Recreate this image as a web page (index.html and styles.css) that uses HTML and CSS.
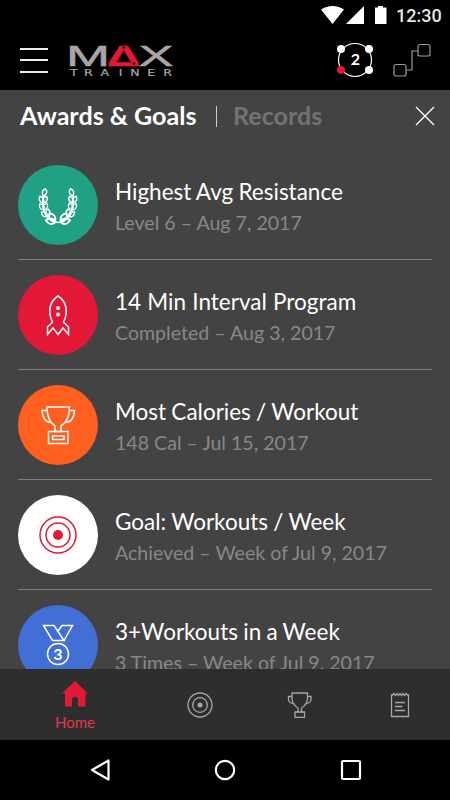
FILE: index.html
```html
<!DOCTYPE html>
<html lang="en">
<head>
  <meta charset="UTF-8">
  <meta name="viewport" content="width=device-width, initial-scale=1">
  <title>Max Trainer - Awards &amp; Goals</title>
  <link rel="stylesheet" href="styles.css">
</head>
<body>
  <div class="status-bar">
    <svg width="66" height="18" viewBox="0 0 66 18" fill="#fff">
      <path d="M0 3.6C6.5-1.2 16.500-1.200 23 3.600L11.500 18z"/>
      <path d="M43 0v18H25z"/>
      <path d="M54 1.500h3V0h5v1.500h3.500V18H54z"/>
    </svg>
    <span class="clock">12:30</span>
  </div>

  <header class="top-bar">
    <button class="menu"><span></span><span></span><span></span></button>
    <svg class="logo" width="114" height="50" viewBox="-5 -8 114 50">
      <g class="logo-max">
        <text x="-4" y="23" textLength="44" lengthAdjust="spacingAndGlyphs">M</text>
        <text class="linkage" x="37" y="23" textLength="33" lengthAdjust="spacingAndGlyphs">Δ</text>
        <text x="68.500" y="23" textLength="35" lengthAdjust="spacingAndGlyphs">X</text>
      </g>
      <text class="logo-sub" transform="scale(1.4 1)" x="0 10 21.800 34.800 43 55.200 66.600" y="33.300">TRAINER</text>
      <circle cx="53.700" cy="4.500" r="1.700" fill="#000" stroke="#e31836"/>
      <circle cx="64" cy="20.500" r="1.700" fill="#000" stroke="#e31836"/>
    </svg>
    <svg class="users" width="38" height="36" viewBox="0 0 38 36">
      <circle cx="19" cy="18" r="16.500" fill="none" stroke="#fff" stroke-width="1.200"/>
      <g fill="#fff">
        <circle cx="5" cy="7" r="4"/>
        <circle cx="33" cy="7" r="4"/>
        <circle cx="33" cy="28" r="4"/>
      </g>
      <circle cx="5" cy="28" r="4" fill="#e31836"/>
      <text x="19.500" y="23" text-anchor="middle">2</text>
    </svg>
    <svg class="link" width="38" height="34" viewBox="0 0 38 34" fill="none" stroke="#999" stroke-width="1.200">
      <rect x="1" y="21.500" width="12" height="11.500" rx="2"/>
      <rect x="25" y="1.500" width="12" height="11.500" rx="2"/>
      <path d="M13 27h6V8h6"/>
    </svg>
  </header>

  <main>
    <div class="tabs">
      <span class="tab active">Awards &amp; Goals</span>
      <span class="divider"></span>
      <span class="tab">Records</span>
      <button class="close">
        <svg width="20" height="20" viewBox="0 0 20 20" stroke="#fff" stroke-width="1.300"><path d="M1 1l18 18M19 1L1 19"/></svg>
      </button>
    </div>

    <ul class="awards">
      <li>
        <svg class="badge green" viewBox="0 0 80 80">
          <defs>
            <path id="leaf" d="M0 0C-3.200-2.500-2.500-5.500 0-7.500C2.500-5.500 3.200-2.500 0 0z"/>
            <g id="branch">
              <path d="M40 57.500C29 56 24 47 25 36V30"/>
              <use href="#leaf" transform="translate(25.500 31) rotate(15)"/>
              <use href="#leaf" transform="translate(25 38) rotate(-25)"/>
              <use href="#leaf" transform="translate(25 38) rotate(30)"/>
              <use href="#leaf" transform="translate(26 45) rotate(-35)"/>
              <use href="#leaf" transform="translate(26 45) rotate(22)"/>
              <use href="#leaf" transform="translate(29.500 51.500) rotate(-54)"/>
              <use href="#leaf" transform="translate(29.500 51.500) rotate(4)"/>
              <use href="#leaf" transform="translate(37.500 57) rotate(-80) scale(1.300)"/>
              <use href="#leaf" transform="translate(37 56.500) rotate(-35) scale(1.300)"/>
            </g>
          </defs>
          <use href="#branch"/>
          <use href="#branch" transform="matrix(-1 0 0 1 80 0)"/>
        </svg>
        <div class="info"><h3>Highest Avg Resistance</h3><p>Level 6 – Aug 7, 2017</p></div>
      </li>
      <li>
        <svg class="badge red" viewBox="0 0 80 80">
          <path d="M40 21C33 25.500 28.500 35 34.500 47L29.500 52V59.500L35 53L40 59.500L45 53L50.500 59.500V52L45.500 47C51.500 35 47 25.500 40 21z"/>
          <circle class="solid" cx="40" cy="33" r="2"/>
          <circle class="solid" cx="40" cy="39.500" r="2"/>
        </svg>
        <div class="info"><h3 class="wide">14 Min Interval Program</h3><p>Completed – Aug 3, 2017</p></div>
      </li>
      <li>
        <svg class="badge orange" viewBox="0 0 80 80">
          <path d="M29 22H51.500C51.500 31.500 49 37.500 43 41V46.500H37V41C31.500 37.500 29 31.500 29 22z"/>
          <path d="M29.500 25.500H24C24.500 32.500 27 37.500 33.500 37.500M51 25.500H56.500C56 32.500 53.500 37.500 47 37.500"/>
          <path d="M30.500 46.500H50V58.500H30.500zM34.500 51H46V54.500H34.500z"/>
        </svg>
        <div class="info"><h3>Most Calories / Workout</h3><p>148 Cal – Jul 15, 2017</p></div>
      </li>
      <li>
        <svg class="badge white" viewBox="0 0 80 80">
          <circle cx="40" cy="40" r="18"/>
          <circle cx="40" cy="40" r="12"/>
          <circle class="solid" cx="40" cy="40" r="5"/>
        </svg>
        <div class="info"><h3>Goal: Workouts / Week</h3><p>Achieved – Week of Jul 9, 2017</p></div>
      </li>
      <li>
        <svg class="badge blue" viewBox="0 0 80 80">
          <path d="M25.500 20.500H36L46 35.500H34.500zM40 26L44 20.500H54.500L46 35.500"/>
          <circle cx="40" cy="49" r="10.500"/>
          <text x="40" y="54.700" text-anchor="middle">3</text>
        </svg>
        <div class="info"><h3>3+Workouts in a Week</h3><p>3 Times – Week of Jul 9, 2017</p></div>
      </li>
    </ul>
  </main>

  <nav class="tab-bar">
    <a class="active">
      <svg width="26" height="26" viewBox="0 0 26 26" fill="#e31836"><path d="M13 0L26 12.500H23.500V25.500H16V18.500C16 14.700 10 14.700 10 18.500V25.500H3V12.500H0z"/></svg>
      <span>Home</span>
    </a>
    <a>
      <svg width="26" height="26" viewBox="0 0 26 26">
        <circle cx="13" cy="13" r="12"/>
        <circle cx="13" cy="13" r="7.300"/>
        <circle cx="13" cy="13" r="2.500" fill="#a6a6a6" stroke="none"/>
      </svg>
    </a>
    <a>
      <svg width="26" height="26" viewBox="0 0 26 26">
        <path d="M5 1H20.500V6C20.500 11 18.500 13.500 14.500 16V20H17.500V25.500H8V20H11V16C7 13.500 5 11 5 6z"/>
        <path d="M5 4.500H1.500V8Q2 11 6.500 11.500M20.500 4.500H24V8Q23.500 11 19 11.500M10 20h6"/>
      </svg>
    </a>
    <a>
      <svg width="20" height="26" viewBox="0 0 20 26">
        <path d="M4 1.500L2.500 3Q1.500 2 1.500 4V24.500H18.500V4Q18.500 2 17.500 3L16 1.500L14.500 3.500L13 1.500L11.500 3.500L10 1.500L8.500 3.500L7 1.500L5.500 3.500z"/>
        <path d="M5 10.500H15M5 14.500H12.500M5 18.500H15"/>
      </svg>
    </a>
  </nav>

  <footer class="system-bar">
    <svg width="20" height="22" viewBox="0 0 20 22"><path d="M18.500 1.500V20.500L2 11z"/></svg>
    <svg width="22" height="22" viewBox="0 0 22 22"><circle cx="11" cy="11" r="9.200"/></svg>
    <svg width="22" height="22" viewBox="0 0 22 22"><rect x="2" y="2" width="18" height="18" rx="1"/></svg>
  </footer>
</body>
</html>
```

FILE: styles.css
```css
* {
  box-sizing: border-box;
}
body {
  margin: 0;
  height: 800px;
  display: flex;
  flex-direction: column;
  background: #000;
  color: #fff;
  font-family: Lato, sans-serif;
  overflow: hidden;
}
button {
  padding: 0;
  border: none;
  background: none;
}
svg {
  display: block;
  flex: none;
}
.status-bar {
  height: 30px;
  padding: 6px 10px 0 0;
  display: flex;
  justify-content: flex-end;
  gap: 9px;
}
.clock {
  width: 44px;
  font: 500 18px/19px Roboto, sans-serif;
  color: #e6e6e6;
  white-space: nowrap;
}
.top-bar {
  height: 60px;
  padding: 0 19px 0 20px;
  display: flex;
  align-items: center;
}
.menu {
  width: 28px;
  height: 25px;
  display: flex;
  flex-direction: column;
  justify-content: space-between;
}
.menu span {
  width: 28px;
  height: 2px;
  background: #eee;
}
.logo {
  margin-left: 17px;
}
.logo-max {
  font: 400 30px "Liberation Sans", sans-serif;
  fill: #a6a6a6;
  stroke: #a6a6a6;
  stroke-width: 0.500;
}
.logo-max .linkage {
  font-weight: 700;
  fill: #e31836;
  stroke: #e31836;
}
.logo-sub {
  font: 400 9px "DejaVu Sans", sans-serif;
  fill: #a6a6a6;
  stroke: #a6a6a6;
  stroke-width: 0.200;
}
.users {
  margin-left: auto;
  margin-right: 19px;
}
.users text {
  font: 700 16px Lato, sans-serif;
  fill: #fff;
}

main {
  height: 579px;
  background: #434343;
  overflow: hidden;
}
.tabs {
  height: 52px;
  padding: 0 15px 0 20px;
  display: flex;
  align-items: center;
}
.tab {
  margin-top: -2px;
  font-size: 25.100px;
  font-weight: 700;
  color: #737373;
}
.tab.active {
  color: #fff;
}
.divider {
  width: 1px;
  height: 21px;
  margin: 0 16px 0 19.500px;
  background: #ccc;
}
.close {
  margin-left: auto;
}
.awards {
  list-style: none;
  margin: 8px 18px 0;
  padding: 0;
}
.awards li {
  height: 110px;
  padding-top: 5px;
  display: flex;
  align-items: center;
  gap: 17px;
  border-bottom: 1px solid #808080;
}
.badge {
  width: 80px;
  height: 80px;
  margin-top: -4px;
  border-radius: 50%;
  fill: none;
  stroke: #fff;
  stroke-width: 1.500;
}
.badge .solid {
  fill: #fff;
  stroke: none;
}
.green {
  background: #20a084;
  stroke-width: 1.400;
}
.red {
  background: #e31836;
}
.orange {
  background: #ff5f1f;
}
.white {
  background: #fff;
  stroke: #e31836;
}
.white .solid {
  fill: #e31836;
}
.blue {
  background: #426fd6;
}
.badge text {
  font: 700 16px Lato, sans-serif;
  fill: #fff;
  stroke: none;
}
.info {
  margin-top: -1px;
  white-space: nowrap;
}
.info h3 {
  margin: 0;
  font-size: 22.500px;
  font-weight: 400;
  line-height: 31px;
  word-spacing: -0.500px;
}
.info h3.wide {
  word-spacing: 0.500px;
}
.info p {
  margin: 0;
  padding-top: 1px;
  font-size: 19.600px;
  line-height: 30px;
  color: #888;
}

.tab-bar {
  height: 71px;
  display: grid;
  grid-template-columns: 150px 100px 100px 100px;
  background: #2e2e2e;
}
.tab-bar a {
  display: flex;
  flex-direction: column;
  align-items: center;
  justify-content: center;
}
.tab-bar .active {
  padding-top: 4px;
}
.tab-bar svg {
  fill: none;
  stroke: #a6a6a6;
  stroke-width: 1.300;
}
.tab-bar .active svg {
  fill: #e31836;
  stroke: none;
}
.tab-bar .active span {
  margin-top: 5px;
  font-size: 15px;
  line-height: 20px;
  color: #e8344f;
}
.system-bar {
  height: 60px;
  padding: 0 88px 0 90px;
  display: flex;
  align-items: center;
  justify-content: space-between;
}
.system-bar svg {
  fill: none;
  stroke: #fff;
  stroke-width: 2.200;
  stroke-linejoin: round;
}
```
